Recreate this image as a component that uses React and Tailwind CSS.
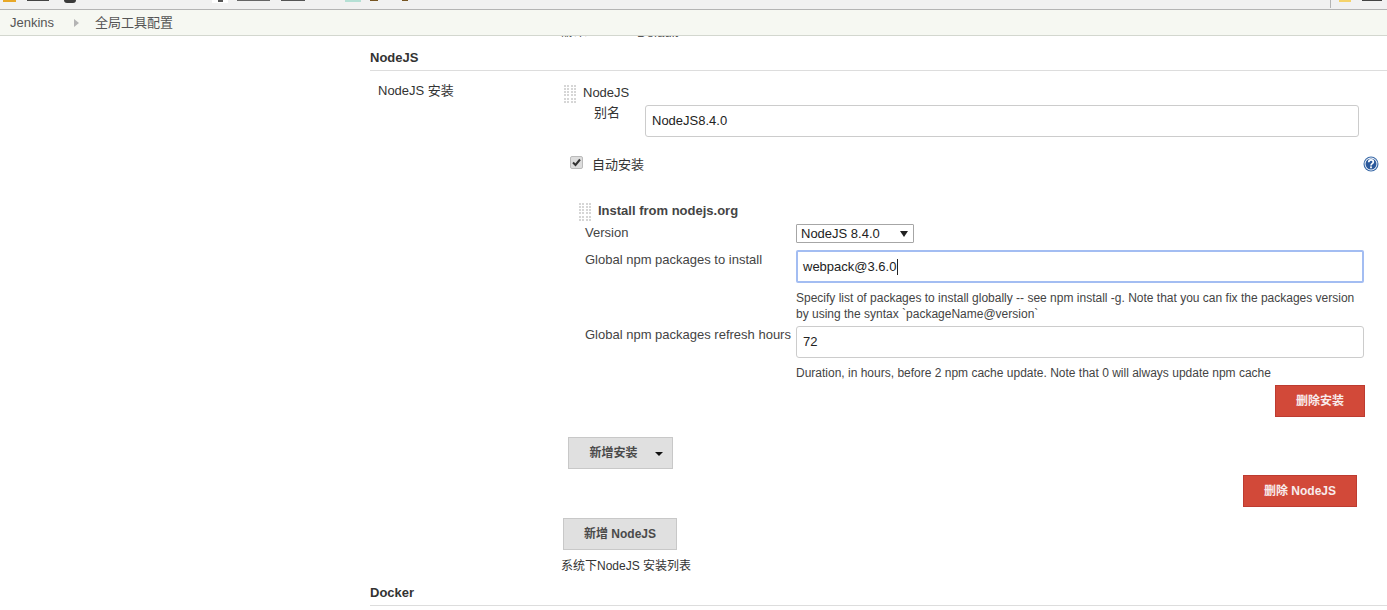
const FONT = "font-['Liberation_Sans','Noto_Sans_CJK_SC',sans-serif]";

// Dotted grip shown beside repeatable blocks
function DragHandle() {
  const dots = Array.from({ length: 24 });
  return (
    <div className="grid h-[18px] w-[12px] shrink-0 grid-cols-4 gap-px">
      {dots.map((_, i) => (
        <span key={i} className="h-[2px] w-[2px] bg-[#d6d6d6]" />
      ))}
    </div>
  );
}

function HelpIcon() {
  return (
    <svg width="16" height="16" viewBox="0 0 16 16" className="ml-auto mr-[8px] shrink-0">
      <circle cx="8" cy="8" r="7.5" fill="#3a6aa8" />
      <circle cx="8" cy="8" r="6.4" fill="#ffffff" />
      <circle cx="8" cy="8" r="5.5" fill="#2c5a9c" />
      <path d="M5.7 6.2C5.8 4.6 6.8 3.9 8 3.9c1.3 0 2.3.8 2.3 2 0 1.7-2.3 1.7-2.3 3.5" fill="none" stroke="#ffffff" strokeWidth="1.7" />
      <rect x="7.1" y="10.4" width="1.8" height="1.8" fill="#ffffff" />
    </svg>
  );
}

function GreyButton({ children, className = '' }) {
  return (
    <button className={`h-[32px] border border-[#c8c8c8] bg-[#e0e0e0] text-[12px] font-bold text-[#4a4a4a] ${className}`}>
      {children}
    </button>
  );
}

function RedButton({ children, className = '' }) {
  return (
    <button className={`h-[32px] border border-[#bd3b30] bg-[#d24939] text-[12px] font-bold text-[#f8ecec] ${className}`}>
      {children}
    </button>
  );
}

function TextField({ value, className = '' }) {
  return (
    <div className={`flex h-[32px] items-center rounded-[3px] border border-[#cccccc] bg-white pl-[6px] text-[13px] text-[#222222] ${className}`}>
      {value}
    </div>
  );
}

export default function App() {
  return (
    <div className={`${FONT} h-[610px] w-[1387px] overflow-hidden bg-white text-[13px] text-[#333333]`}>
      {/* Browser bookmarks strip, cut off by the capture */}
      <div className="flex h-[10px] items-start overflow-hidden border-b border-[#b4b4b4] bg-[#f1f1f1]">
        <span className="ml-[3px] h-[2px] w-[13px] bg-[#e8a828]" />
        <span className="ml-[11px] h-px w-[22px] bg-[#444444]" />
        <span className="ml-[15px] h-[3px] w-[12px] rounded-b-full bg-[#3a3a3a]" />
        <span className="ml-[136px] flex h-[3px] w-[16px] justify-center bg-white">
          <span className="h-[2px] w-[5px] bg-[#555555]" />
        </span>
        <span className="ml-[9px] h-px w-[33px] bg-[#666666]" />
        <span className="ml-[11px] h-px w-[24px] bg-[#555555]" />
        <span className="ml-[40px] h-[2px] w-[16px] bg-[#b5e0d5]" />
        <span className="ml-[9px] h-px w-[8px] bg-[#775522]" />
        <span className="ml-[24px] h-px w-[6px] bg-[#775522]" />
        <span className="ml-auto flex items-start">
          <span className="h-[8px] w-px bg-[#b4b4b4]" />
          <span className="ml-[8px] h-[2px] w-[12px] bg-[#f5d36a]" />
          <span className="ml-[11px] h-px w-[20px] bg-[#444444]" />
          <span className="w-[5px]" />
        </span>
      </div>

      {/* Breadcrumb */}
      <div className="flex h-[26px] items-center border-b border-[#d3d7cf] bg-[#f6f8f2] pl-[10px] text-[#555555]">
        <span>Jenkins</span>
        <span className="ml-[20px] h-0 w-0 border-y-[4px] border-l-[5px] border-y-transparent border-l-[#b4b4b4]" />
        <span className="ml-[16px]">全局工具配置</span>
      </div>

      <div className="pl-[370px]">
        {/* Previous row scrolled under the breadcrumb */}
        <div className="relative h-[3px] overflow-hidden">
          <div className="absolute left-[191px] top-0 flex h-[1px] w-[300px] items-end gap-[50px] overflow-hidden text-[13px] leading-[9px] text-[#555555]">
            <span>版本</span>
            <span>Default</span>
          </div>
        </div>

        <h3 className="mt-[11px] h-[21px] border-b border-[#dddddd] text-[13px] font-bold leading-[16px] text-[#333333]">NodeJS</h3>

        <div className="flex pt-[11px]">
          <div className="w-[191px] pl-[8px] pt-[1px] leading-[16px]">NodeJS 安装</div>

          <div className="w-[826px] pt-[3px]">
            <div className="flex items-start pl-[3px]">
              <DragHandle />
              <span className="ml-[7px] leading-[16px]">NodeJS</span>
            </div>

            <div className="mt-[2px] flex items-start">
              <span className="ml-[33px] w-[51px] leading-[16px]">别名</span>
              <TextField value="NodeJS8.4.0" className="w-[714px]" />
            </div>

            <div className="mt-[19px] flex h-[16px] items-start pl-[9px]">
              <span className="flex h-[13px] w-[13px] shrink-0 items-center justify-center rounded-[2px] border border-[#bbbbbb] bg-[#dddddd]">
                <svg width="9" height="9" viewBox="0 0 9 9">
                  <path d="M1 4.5L3.5 7L8 1.5" fill="none" stroke="#333333" strokeWidth="2" />
                </svg>
              </span>
              <span className="ml-[9px] whitespace-nowrap pt-[1px] leading-[16px]">自动安装</span>
              <HelpIcon />
            </div>

            {/* Installer block */}
            <div className="mt-[31px]">
              <div className="flex items-start pl-[18px]">
                <DragHandle />
                <span className="ml-[7px] font-bold leading-[16px] text-[#444444]">Install from nodejs.org</span>
              </div>

              <div className="flex h-[23px] items-start pl-[24px] pt-[3px]">
                <span className="w-[211px] pt-[1px] leading-[16px] text-[#444444]">Version</span>
                <div className="flex h-[19px] w-[118px] items-center justify-between rounded-[1px] border border-[#a6a6a6] bg-white pl-[4px] pr-[5px] text-[13px] leading-[16px] text-[#222222]">
                  <span>NodeJS 8.4.0</span>
                  <span className="h-0 w-0 border-x-[4px] border-t-[6px] border-x-transparent border-t-[#222222]" />
                </div>
              </div>

              <div className="mt-[6px] flex items-start pl-[24px]">
                <span className="w-[211px] pt-[2px] leading-[16px] text-[#444444]">Global npm packages to install</span>
                <div className="flex h-[33px] w-[568px] items-center rounded-[2px] border-2 border-[#a3bdf2] bg-white pl-[5px] text-[13px] text-[#222222]">
                  webpack@3.6.0<span className="ml-px h-[16px] w-px bg-[#222222]" />
                </div>
              </div>

              <div className="ml-[235px] mt-[7px] text-[12px] leading-[16px] text-[#444444]">
                Specify list of packages to install globally -- see npm install -g. Note that you can fix the packages version
                <br />
                by using the syntax `packageName@version`
              </div>

              <div className="mt-[4px] flex items-start pl-[24px]">
                <span className="w-[211px] whitespace-nowrap pt-[1px] leading-[16px] text-[#444444]">Global npm packages refresh hours</span>
                <TextField value="72" className="w-[568px]" />
              </div>

              <div className="ml-[235px] mt-[7px] text-[12px] leading-[16px] text-[#444444]">
                Duration, in hours, before 2 npm cache update. Note that 0 will always update npm cache
              </div>

              <div className="mt-[4px] flex justify-end pr-[22px]">
                <RedButton className="w-[90px]">删除安装</RedButton>
              </div>
            </div>

            <GreyButton className="relative ml-[7px] mt-[20px] block w-[105px] pr-[14px]">
              新增安装
              <span className="absolute right-[9px] top-[14px] h-0 w-0 border-x-[4px] border-t-[4px] border-x-transparent border-t-[#111111]" />
            </GreyButton>

            <div className="mt-[6px] flex justify-end pr-[30px]">
              <RedButton className="w-[114px]">删除 NodeJS</RedButton>
            </div>

            <GreyButton className="ml-[2px] mt-[11px] block w-[114px]">新增 NodeJS</GreyButton>

            <div className="mt-[8px] text-[12px] leading-[16px] text-[#333333]">系统下NodeJS 安装列表</div>
          </div>
        </div>

        <h3 className="mt-[11px] h-[21px] border-b border-[#dddddd] text-[13px] font-bold leading-[16px] text-[#333333]">Docker</h3>
      </div>
    </div>
  );
}
